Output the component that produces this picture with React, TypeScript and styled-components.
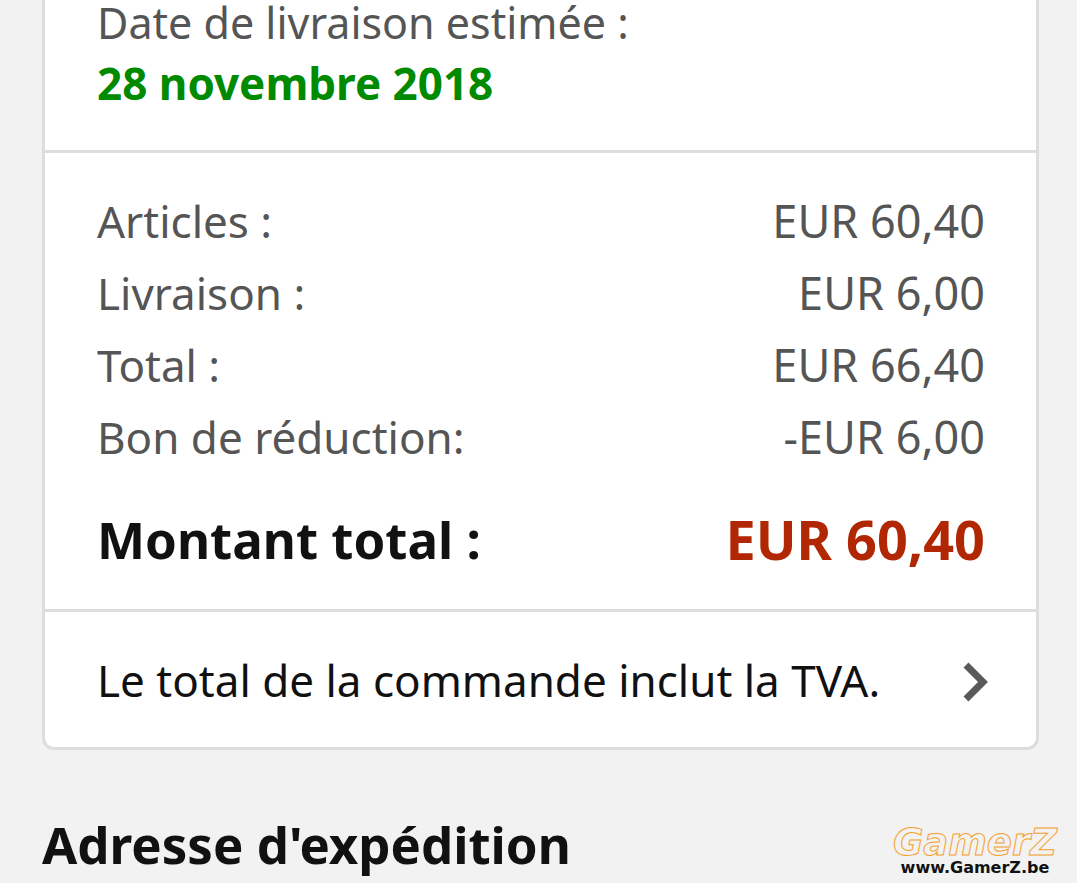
import React from 'react';
import styled, { createGlobalStyle } from 'styled-components';

const GlobalStyle = createGlobalStyle`
  * { box-sizing: border-box; }
  body {
    margin: 0;
    background: #f2f2f2;
    color: #111;
    font-family: "Noto Sans", "Open Sans", sans-serif;
    font-size: 44px;
  }
`;

const Page = styled.main`
  position: relative;
  overflow: hidden;
  padding: 0 38px 0 42px;
`;

const Card = styled.section`
  background: #fff;
  border: 3px solid #ddd;
  border-top: 0;
  border-radius: 0 0 12px 12px;
`;

const Delivery = styled.div`
  display: flex;
  flex-direction: column;
  gap: 14px;
  padding: 0 52px 44px;
  line-height: 46px;
  color: #555;
`;

const DeliveryLabel = styled.span`
  font-size: 43px;
`;

const DeliveryDate = styled.strong`
  color: #008a00;
`;

const Summary = styled.div`
  border: solid #ddd;
  border-width: 3px 0;
  padding: 32px 51px 4px 52px;
`;

const Costs = styled.table`
  width: 100%;
  border-collapse: collapse;
  color: #555;
  line-height: 72px;
`;

const Label = styled.th`
  padding: 0;
  text-align: left;
  font-weight: 400;
`;

const Amount = styled.td`
  padding: 0;
  text-align: right;
  font-size: 45px;
`;

const TotalRow = styled.tr`
  line-height: 132px;
`;

const TotalLabel = styled(Label)`
  color: #111;
  font-size: 51px;
  font-weight: 700;
`;

const TotalAmount = styled(Amount)`
  color: #b12704;
  font-size: 54px;
  font-weight: 700;
`;

const TaxButton = styled.button`
  display: flex;
  align-items: center;
  justify-content: space-between;
  width: 100%;
  padding: 32px 48px 31px 52px;
  border: 0;
  background: none;
  color: inherit;
  font: inherit;
  line-height: 72px;
  text-align: left;
`;

const Heading = styled.h1`
  margin: 56px 0 0;
  font-size: 51px;
  line-height: 77px;
`;

const Watermark = styled.a`
  position: absolute;
  right: 20px;
  bottom: 7px;
  display: flex;
  flex-direction: column;
  align-items: center;
  color: #111;
  font-family: "DejaVu Sans", sans-serif;
  text-decoration: none;
`;

const Brand = styled.span`
  color: transparent;
  -webkit-text-stroke: 1px #f5a02c;
  font-size: 37px;
  font-weight: 700;
  font-style: italic;
  line-height: 34px;
`;

const Site = styled.span`
  font-size: 16px;
  font-weight: 700;
  line-height: 16px;
`;

const costs = [
  ['Articles :', 'EUR 60,40'],
  ['Livraison :', 'EUR 6,00'],
  ['Total :', 'EUR 66,40'],
  ['Bon de réduction:', '-EUR 6,00'],
];

export default function App() {
  return (
    <Page>
      <GlobalStyle />
      <Card>
        <Delivery>
          <DeliveryLabel>Date de livraison estimée :</DeliveryLabel>
          <DeliveryDate>28 novembre 2018</DeliveryDate>
        </Delivery>
        <Summary>
          <Costs>
            <tbody>
              {costs.map(([label, amount]) => (
                <tr key={label}>
                  <Label scope="row">{label}</Label>
                  <Amount>{amount}</Amount>
                </tr>
              ))}
              <TotalRow>
                <TotalLabel scope="row">Montant total :</TotalLabel>
                <TotalAmount>EUR 60,40</TotalAmount>
              </TotalRow>
            </tbody>
          </Costs>
        </Summary>
        <TaxButton type="button">
          <span>Le total de la commande inclut la TVA.</span>
          <svg width="26" height="44" viewBox="0 0 26 44" fill="none" stroke="#5a5a5a" strokeWidth="7" aria-hidden="true">
            <path d="M4 7 L21 24 L4 41" />
          </svg>
        </TaxButton>
      </Card>
      <Heading>Adresse d'expédition</Heading>
      <Watermark href="#">
        <Brand>GamerZ</Brand>
        <Site>www.GamerZ.be</Site>
      </Watermark>
    </Page>
  );
}
